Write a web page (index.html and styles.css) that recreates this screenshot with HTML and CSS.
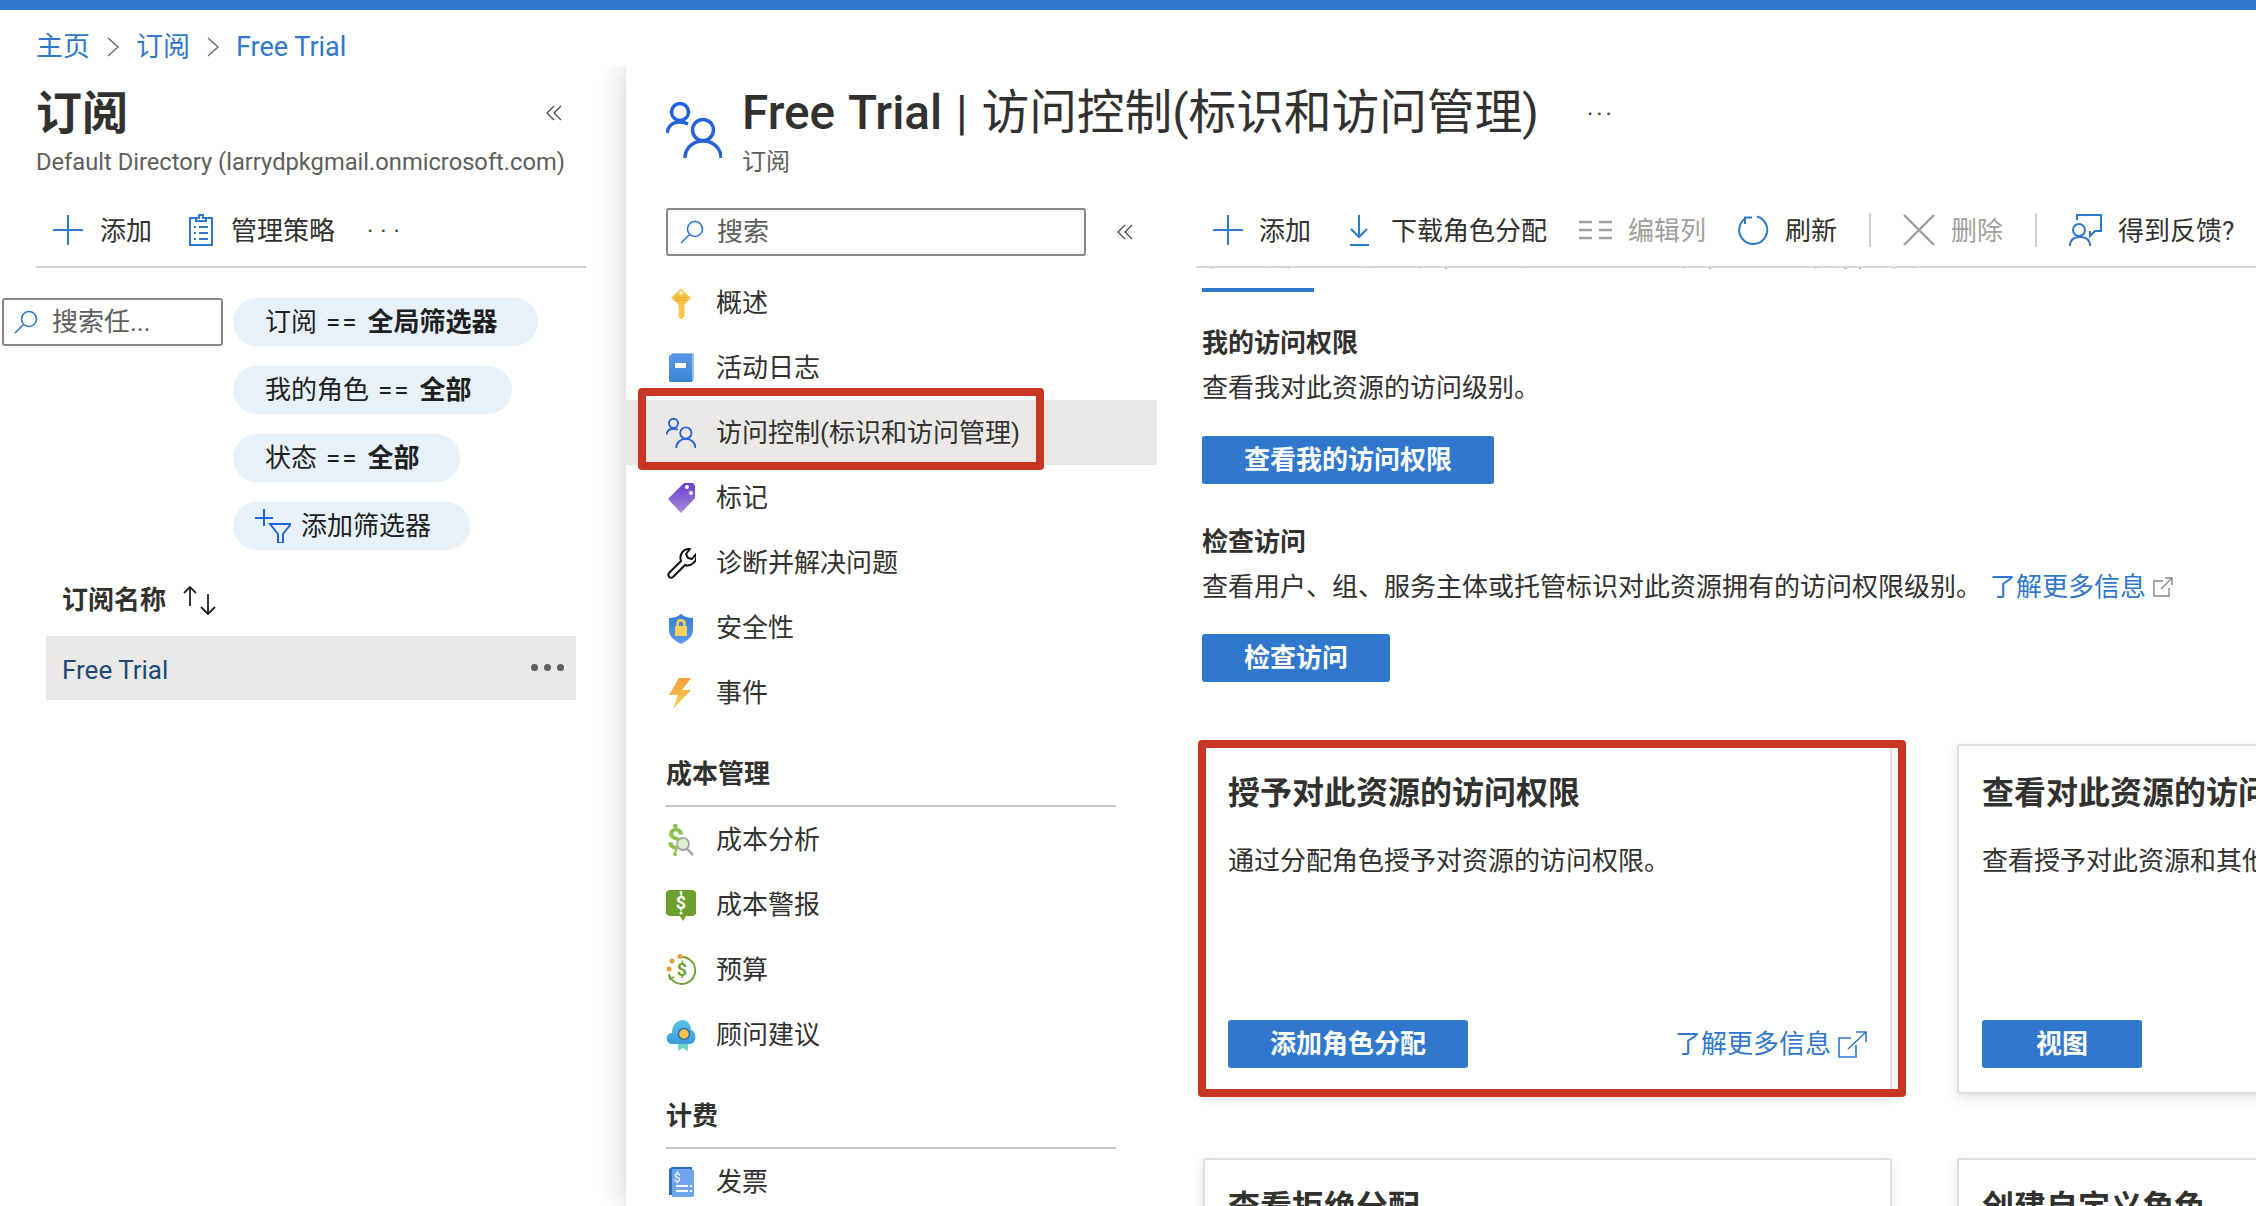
FILE: index.html
```html
<!DOCTYPE html>
<html lang="zh-CN">
<head>
    <meta charset="UTF-8">
    <title>Free Trial | 访问控制</title>
    <link rel="stylesheet" href="styles.css">
</head>
<body>
    <div class="topbar"></div>
    <div class="page">
        <div class="left">
            <div class="crumbs">
                <a>主页</a>
                <svg class="crumb-sep" viewBox="0 0 12 20"><path d="M1 1l10 9-10 9"/></svg>
                <a>订阅</a>
                <svg class="crumb-sep" viewBox="0 0 12 20"><path d="M1 1l10 9-10 9"/></svg>
                <a>Free Trial</a>
            </div>
            <div class="left-title">
                <h1>订阅</h1>
                <svg class="collapse" viewBox="0 0 16 16"><path d="M8 1L1 8l7 7M15 1L8 8l7 7"/></svg>
            </div>
            <div class="left-sub">Default Directory (larrydpkgmail.onmicrosoft.com)</div>
            <div class="left-tools">
                <svg class="ico-plus" viewBox="0 0 30 30"><path d="M15 0v30M0 15h30"/></svg>
                <span class="lt-add">添加</span>
                <svg class="ico-clip" viewBox="0 0 24 32"><path d="M7 4H1v27h22V4h-6M7 7V4h3V1h4v3h3v3zM5 13h2M10 13h9M5 19h2M10 19h9M5 25h2M10 25h9"/></svg>
                <span class="lt-policy">管理策略</span>
                <span class="dots-thin">···</span>
            </div>
            <div class="filters">
                <div class="search search-small">
                    <svg class="ico-search" viewBox="0 0 24 24"><circle cx="15" cy="9" r="7.5"/><path d="M9.5 14.5L1 23"/></svg>
                    <span>搜索任...</span>
                </div>
                <div class="pills">
                    <div class="pill">订阅<span class="eq">==</span><b>全局筛选器</b></div>
                    <div class="pill">我的角色<span class="eq">==</span><b>全部</b></div>
                    <div class="pill">状态<span class="eq">==</span><b>全部</b></div>
                    <div class="pill pill-add">
                        <svg class="ico-filter" viewBox="0 0 36 34"><path class="p" d="M9 0v17M0 9h18"/><path class="f" d="M15 15h21L28 25v9h-5v-9z"/></svg>
                        添加筛选器
                    </div>
                </div>
            </div>
            <div class="list-head">
                <b>订阅名称</b>
                <svg class="ico-sort" viewBox="0 0 34 30"><path d="M7 21V2M1 8l6-6 6 6M25 9v20M18 22l7 7 7-7"/></svg>
            </div>
            <div class="list-row">
                <span>Free Trial</span>
                <div class="dots"><i></i><i></i><i></i></div>
            </div>
        </div>

        <div class="main">
            <div class="main-head">
                <svg class="ico-users" viewBox="0 0 56 56"><circle cx="14" cy="10" r="8.5"/><path d="M1 31c1-7 6-11 13-11 3 0 6 1 8 2"/><circle cx="37" cy="28" r="10.5"/><path d="M19 56c0-10 8-17 18-17s18 7 18 17"/></svg>
                <div class="main-titles">
                    <h2><b>Free Trial</b> | 访问控制(标识和访问管理)</h2>
                    <div class="main-sub">订阅</div>
                </div>
                <span class="dots-thin main-more">···</span>
            </div>
            <div class="main-body">
                <div class="nav">
                    <div class="nav-search">
                        <div class="search search-nav">
                            <svg class="ico-search" viewBox="0 0 24 24"><circle cx="15" cy="9" r="7.5"/><path d="M9.5 14.5L1 23"/></svg>
                            <span>搜索</span>
                        </div>
                        <svg class="collapse" viewBox="0 0 16 16"><path d="M8 1L1 8l7 7M15 1L8 8l7 7"/></svg>
                    </div>
                    <div class="nav-item">
                        <svg viewBox="0 0 30 32"><path fill="#f8c344" stroke="#f8c344" stroke-linejoin="round" d="M15 2l9.500 9-6.500 6.500V29l-3 3-2-2v-2l1-1-1-1v-1l1-1-1-1v-5.500L5.500 11z"/><circle cx="15" cy="6" r="1.800" fill="#fff"/><path stroke="#e8a52b" d="M10 10.500h10M10 13h10"/></svg>
                        概述
                    </div>
                    <div class="nav-item">
                        <svg viewBox="0 0 30 32"><defs><linearGradient id="gb" x1="0" y1="0" x2="0" y2="1"><stop offset="0" stop-color="#5a9bea"/><stop offset="1" stop-color="#3c82d4"/></linearGradient></defs><path fill="url(#gb)" d="M3 4l3-2h20v27l-2 1H4l-1-1z"/><path fill="none" stroke="#3c82d4" d="M6 2h21v26l-2 2"/><rect x="9" y="11" width="11" height="5" fill="#fff"/></svg>
                        活动日志
                    </div>
                    <div class="nav-item selected">
                        <svg class="ico-users" viewBox="0 0 56 56"><circle cx="14" cy="10" r="8.500"/><path d="M1 31c1-7 6-11 13-11 3 0 6 1 8 2"/><circle cx="37" cy="28" r="10.500"/><path d="M19 56c0-10 8-17 18-17s18 7 18 17"/></svg>
                        访问控制(标识和访问管理)
                        <div class="mark mark-nav"></div>
                    </div>
                    <div class="nav-item">
                        <svg viewBox="0 0 30 32"><defs><linearGradient id="gt" x1="0" y1="0" x2="0" y2="1"><stop offset="0" stop-color="#6a3fd0"/><stop offset="1" stop-color="#a88ad8"/></linearGradient></defs><path fill="url(#gt)" d="M2 17L18 1h9l2 3v12L15 31z"/><circle cx="21" cy="5" r="2" fill="#fff"/><circle cx="25" cy="11" r="2" fill="#fff"/></svg>
                        标记
                    </div>
                    <div class="nav-item">
                        <svg viewBox="0 0 30 32"><path fill="none" stroke="#111" stroke-width="2" stroke-linejoin="round" d="M7 30c-3 2-6-1-4-4l12-12c-2-6 2-13 9-12l-4 5 2 4 4 1 4-5c2 7-5 13-11 11z"/></svg>
                        诊断并解决问题
                    </div>
                    <div class="nav-item">
                        <svg viewBox="0 0 30 32"><defs><linearGradient id="gs" x1="0" y1="0" x2="0" y2="1"><stop offset="0" stop-color="#357dd6"/><stop offset="1" stop-color="#5a9ded"/></linearGradient></defs><path fill="url(#gs)" d="M15 2c4 3 8 4 12 4v12c0 7-6 11-12 14C9 29 3 25 3 18V6c4 0 8-1 12-4z"/><rect x="9" y="14" width="12" height="10" fill="#f8cf5c"/><path fill="none" stroke="#f8cf5c" stroke-width="2.500" d="M11.500 14v-2c0-5 7-5 7 0v2"/></svg>
                        安全性
                    </div>
                    <div class="nav-item">
                        <svg viewBox="0 0 30 32"><defs><linearGradient id="gl" x1="0" y1="0" x2="0" y2="1"><stop offset="0" stop-color="#f29c38"/><stop offset="1" stop-color="#fcd35a"/></linearGradient></defs><path fill="url(#gl)" d="M13 1h12L16 13h9L7 32l5-14H3z"/></svg>
                        事件
                    </div>
                    <div class="nav-group">成本管理</div>
                    <div class="nav-item">
                        <svg viewBox="0 0 30 32"><text x="1" y="25" class="dollar" fill="#8cc24c">$</text><circle cx="9" cy="2" r="2" fill="#8cc24c"/><circle cx="9" cy="30" r="2" fill="#8cc24c"/><circle cx="17" cy="20" r="6" fill="#dfeecd" stroke="#a8a8a8" stroke-width="1.800"/><path stroke="#a8a8a8" stroke-width="2.500" d="M21 25l6 6"/></svg>
                        成本分析
                    </div>
                    <div class="nav-item">
                        <svg viewBox="0 0 30 32"><path fill="#6b9f2e" d="M3 1h24l3 2v22l-3 2H20l-3 5-3-5H3l-3-2V3z"/><text x="15" y="20" text-anchor="middle" class="dollar-s" fill="#fff">$</text><circle cx="15" cy="3.500" r="1.500" fill="#fff"/><circle cx="15" cy="24" r="1.500" fill="#fff"/></svg>
                        成本警报
                    </div>
                    <div class="nav-item">
                        <svg viewBox="0 0 30 32"><path fill="none" stroke="#6b9f2e" stroke-width="1.800" d="M16 3a13.500 13.500 0 1 1-13 18"/><path fill="none" stroke="#6b9f2e" stroke-width="1.800" d="M3 20l1 5 4-2"/><circle cx="14" cy="2.500" r="2.500" fill="#f0983a"/><circle cx="6" cy="7" r="2.500" fill="#f0983a"/><circle cx="3" cy="15" r="2.500" fill="#f0983a"/><text x="16" y="22" text-anchor="middle" class="dollar-s" fill="#6b9f2e">$</text></svg>
                        预算
                    </div>
                    <div class="nav-item">
                        <svg viewBox="0 0 30 32"><defs><linearGradient id="gc" x1="0" y1="0" x2="0" y2="1"><stop offset="0" stop-color="#5ec4ea"/><stop offset="1" stop-color="#3a9bd8"/></linearGradient></defs><path fill="#6fd8c8" d="M12 20h10v12l-5-3-5 3z"/><path fill="url(#gc)" d="M6 25c-7 0-7-11 0-11 0-8 5-13 11-13 5 0 8 5 8 10 6 1 6 14-1 14z"/><circle cx="18" cy="15" r="5.500" fill="#f8c344" stroke="#2d6cb5" stroke-width="1.500"/></svg>
                        顾问建议
                    </div>
                    <div class="nav-group">计费</div>
                    <div class="nav-item">
                        <svg viewBox="0 0 30 32"><path fill="#2e6cc0" d="M3 3l3-2h20v28H3z"/><path fill="#6fa5ec" d="M6 3h20l2 2v25l-2 1H6z"/><text x="11" y="16" text-anchor="middle" class="dollar-xs" fill="#fff">$</text><path stroke="#fff" stroke-width="2.200" d="M10 20h12M10 25h12M24 20h2M24 25h2"/></svg>
                        发票
                    </div>
                </div>

                <div class="content">
                    <div class="tools">
                        <div class="tool">
                            <svg class="w30 ico-plus" viewBox="0 0 30 30"><path d="M15 0v30M0 15h30"/></svg>
                            <span>添加</span>
                        </div>
                        <div class="tool">
                            <svg class="w32 ico-blue" viewBox="0 0 32 32"><path d="M16 1v22M8 15l8 8 8-8M7 31h19"/></svg>
                            <span>下载角色分配</span>
                        </div>
                        <div class="tool off">
                            <svg class="w33 ico-grey" viewBox="0 0 33 20"><path d="M0 2h13M20 2h13M0 10h13M20 10h13M0 18h13M20 18h13"/></svg>
                            <span>编辑列</span>
                        </div>
                        <div class="tool">
                            <svg class="w31 ico-blue" viewBox="0 0 31 32"><path d="M19 2.500A14 14 0 1 1 8 4M7 10V3.500h7"/></svg>
                            <span>刷新</span>
                        </div>
                        <div class="tool-sep"></div>
                        <div class="tool off">
                            <svg class="w32 ico-grey" viewBox="0 0 32 32"><path d="M1 1l30 30M31 1L1 31"/></svg>
                            <span>删除</span>
                        </div>
                        <div class="tool-sep"></div>
                        <div class="tool">
                            <svg class="w33 ico-blue" viewBox="0 0 33 32"><circle cx="10" cy="16" r="6"/><path d="M1 32c0-6 4-9 10-9s10 3 10 9M8 6V1h24v16h-6l-5 5v-5"/></svg>
                            <span>得到反馈?</span>
                        </div>
                    </div>
                    <div class="tabs">
                        <div class="tab-names">
                            <span>检查访问</span><span>角色分配</span><span>角色</span><span>拒绝分配</span><span>经典管理员</span>
                        </div>
                        <div class="tab-line"></div>
                    </div>

                    <div class="section">
                        <h3>我的访问权限</h3>
                        <p>查看我对此资源的访问级别。</p>
                        <div class="btn">查看我的访问权限</div>
                    </div>
                    <div class="section section-2">
                        <h3>检查访问</h3>
                        <p>查看用户、组、服务主体或托管标识对此资源拥有的访问权限级别。 <a>了解更多信息</a>
                            <svg class="ico-ext-small" viewBox="0 0 20 20"><path d="M10 4H1v15h15v-8M8 12L19 1M12 1h7v7"/></svg>
                        </p>
                        <div class="btn">检查访问</div>
                    </div>

                    <div class="cards">
                        <div class="card">
                            <h4>授予对此资源的访问权限</h4>
                            <p>通过分配角色授予对资源的访问权限。</p>
                            <div class="card-foot">
                                <div class="btn">添加角色分配</div>
                                <a class="more">了解更多信息
                                    <svg class="ico-ext" viewBox="0 0 29 27"><path d="M13 7H1v19h17V14M10 18L28 1M18 1h10v10"/></svg>
                                </a>
                            </div>
                            <div class="mark mark-card"></div>
                        </div>
                        <div class="card">
                            <h4>查看对此资源的访问权限</h4>
                            <p>查看授予对此资源和其他资源的访问权限。</p>
                            <div class="card-foot">
                                <div class="btn btn-view">视图</div>
                            </div>
                        </div>
                        <div class="card">
                            <h4>查看拒绝分配</h4>
                        </div>
                        <div class="card">
                            <h4>创建自定义角色</h4>
                        </div>
                    </div>
                </div>
            </div>
        </div>
    </div>
</body>
</html>
```

FILE: styles.css
```css
html, body {
    margin: 0;
    padding: 0;
    height: 1206px;
    overflow: hidden;
}

body {
    font-family: Roboto, "Noto Sans CJK SC", sans-serif;
    font-size: 26px;
    line-height: 36px;
    color: #323130;
    background-color: #fff;
}

svg {
    display: block;
    flex: none;
    fill: none;
}

.topbar {
    height: 10px;
    background-color: #3078cd;
}

.page {
    display: flex;
    height: 1196px;
}

/* left blade */
.left {
    width: 626px;
    flex: none;
}

.crumbs {
    display: flex;
    align-items: center;
    box-sizing: border-box;
    height: 72px;
    padding: 2px 0 0 36px;
    font-size: 27px;
    color: #3078cd;
}

.crumb-sep {
    width: 12px;
    height: 20px;
    margin: 0 17px;
    stroke: #666;
    stroke-width: 1.3;
}

.left-title {
    display: flex;
    align-items: center;
    justify-content: space-between;
    height: 62px;
    padding: 0 64px 0 36px;
}

.left-title h1 {
    margin: 0;
    font-size: 46px;
    font-weight: 700;
}

.collapse {
    width: 16px;
    height: 16px;
    stroke: #444;
    stroke-width: 1.2;
}

.left-sub {
    padding-left: 36px;
    font-size: 23.7px;
    color: #605e5c;
}

.left-tools {
    display: flex;
    align-items: center;
    height: 72px;
    margin: 14px 40px 0 36px;
    padding-left: 17px;
    border-bottom: 2px solid #d2d0ce;
}

.left-tools span {
    padding-top: 2px;
}

.ico-plus {
    width: 30px;
    height: 30px;
    stroke: #3078cd;
    stroke-width: 2;
}

.lt-add {
    margin-left: 17px;
}

.ico-clip {
    width: 24px;
    height: 32px;
    margin-left: 37px;
    stroke: #3078cd;
    stroke-width: 2;
}

.lt-policy {
    margin-left: 18px;
}

.dots-thin {
    font-size: 24px;
    letter-spacing: 7px;
    margin-left: 32px;
    color: #444;
}

.filters {
    display: flex;
    gap: 10px;
    margin: 30px 0 0 2px;
}

.search {
    display: flex;
    align-items: center;
    box-sizing: border-box;
    height: 48px;
    border: 2px solid #8a8886;
    border-radius: 3px;
    color: #605e5c;
}

.search-small {
    width: 221px;
    gap: 14px;
    padding-left: 10px;
}

.ico-search {
    width: 24px;
    height: 24px;
    stroke: #3078cd;
    stroke-width: 1.6;
}

.pills {
    display: flex;
    flex-direction: column;
    align-items: flex-start;
    gap: 20px;
}

.pill {
    display: flex;
    align-items: center;
    height: 48px;
    padding: 0 40px 0 32px;
    border-radius: 24px;
    background-color: #e7f1fa;
    color: #201f1e;
}

.pill b {
    font-weight: 700;
}

.eq {
    margin: 0 9px;
    letter-spacing: 2px;
}

.pill-add {
    padding: 0 39px 0 22px;
}

.ico-filter {
    width: 36px;
    height: 34px;
    margin-right: 10px;
    stroke: #2564d8;
    stroke-width: 2;
}

.list-head {
    display: flex;
    align-items: center;
    gap: 17px;
    height: 40px;
    margin-top: 30px;
    padding-left: 62px;
}

.ico-sort {
    width: 34px;
    height: 30px;
    stroke: #222;
    stroke-width: 1.8;
}

.list-row {
    display: flex;
    align-items: center;
    justify-content: space-between;
    width: 530px;
    height: 64px;
    margin: 16px 0 0 46px;
    padding: 4px 12px 0 16px;
    box-sizing: border-box;
    background-color: #ebe9e7;
    color: #1b4a7a;
}

.dots {
    display: flex;
    gap: 6px;
    margin-top: -5px;
}

.dots i {
    width: 7px;
    height: 7px;
    border-radius: 50%;
    background-color: #605e5c;
}

/* right blade */
.main {
    flex: 1;
    min-width: 0;
    margin-top: 56px;
    overflow: hidden;
    background-color: #fff;
    box-shadow: 0 0 28px rgba(0, 0, 0, 0.2);
    clip-path: inset(0 0 0 -40px);
}

.main-head {
    display: flex;
    height: 114px;
    padding: 16px 0 0 40px;
    box-sizing: border-box;
}

.main-head > .ico-users {
    width: 56px;
    height: 56px;
    margin: 20px 20px 0 0;
}

.ico-users {
    stroke: #2564d8;
    stroke-width: 3.5;
}

.main-titles h2 {
    margin: 0;
    font-size: 47.7px;
    line-height: 62px;
    font-weight: 400;
    word-spacing: 2px;
    white-space: nowrap;
}

.main-titles h2 b {
    font-weight: 500;
}

.main-sub {
    font-size: 24px;
    color: #605e5c;
}

.main-more {
    margin: 14px 0 0 48px;
    letter-spacing: 3px;
}

.main-body {
    display: flex;
}

.nav {
    width: 531px;
    flex: none;
    padding-top: 28px;
}

.nav-search {
    display: flex;
    align-items: center;
    gap: 31px;
    padding-left: 40px;
    margin-bottom: 14px;
}

.search-nav {
    width: 420px;
    gap: 13px;
    padding-left: 12px;
}

.nav-item {
    position: relative;
    display: flex;
    align-items: center;
    box-sizing: border-box;
    height: 65px;
    padding: 1px 0 0 40px;
    white-space: nowrap;
}

.nav-item > svg {
    width: 30px;
    height: 32px;
    margin-right: 20px;
}

.selected {
    background-color: #ebe9e7;
}

.mark {
    position: absolute;
    box-sizing: border-box;
    border: 8px solid #c93423;
    border-radius: 4px;
}

.mark-nav {
    top: -12px;
    left: 12px;
    width: 406px;
    height: 82px;
}

.nav-group {
    margin: 0 41px 0 40px;
    padding: 31px 0 13px;
    border-bottom: 2px solid #c8c6c4;
    font-weight: 700;
}

.dollar {
    font-size: 30px;
    font-weight: 700;
}

.dollar-s {
    font-size: 18px;
    font-weight: 700;
}

.dollar-xs {
    font-size: 12px;
}

/* content */
.content {
    flex: 1;
    min-width: 0;
    padding-left: 39px;
}

.tools {
    display: flex;
    align-items: center;
    height: 88px;
    padding: 26px 0 12px 17px;
    box-sizing: border-box;
    border-bottom: 2px solid #d8d8d8;
    white-space: nowrap;
}

.tool {
    display: flex;
    align-items: center;
    gap: 16px;
    margin-left: 32px;
}

.tool span {
    padding-top: 2px;
}

.tool:first-child {
    margin-left: 0;
}

.off {
    color: #a19f9d;
}

.w30 { width: 30px; height: 30px; }
.w31 { width: 31px; height: 32px; }
.w32 { width: 32px; height: 32px; }
.w33 { width: 33px; height: 32px; }

.ico-blue {
    stroke: #3078cd;
    stroke-width: 2;
}

.ico-grey {
    stroke: #a19f9d;
    stroke-width: 2.4;
}

.tool-sep {
    width: 2px;
    height: 34px;
    margin-left: 32px;
    background-color: #d2d0ce;
}

.tabs {
    height: 24px;
    margin-left: 6px;
    overflow: hidden;
}

.tab-names {
    display: flex;
    gap: 54px;
    height: 20px;
    margin: -29.500px 0 29.500px 5px;
    line-height: 36px;
    white-space: nowrap;
}

.tab-line {
    width: 112px;
    height: 4px;
    background-color: #3078cd;
}

.section {
    margin: 33px 0 0 6px;
    white-space: nowrap;
}

.section-2 {
    margin-top: 40px;
}

.section h3 {
    margin: 0;
    font-size: 26px;
    font-weight: 700;
}

.section p {
    display: flex;
    align-items: center;
    margin: 9px 0 30px;
}

.section-2 p {
    margin-bottom: 29px;
}

a {
    color: #3078cd;
}

.section p a {
    margin-left: 8px;
}

.btn {
    display: inline-flex;
    align-items: center;
    justify-content: center;
    height: 48px;
    padding: 0 42px;
    border-radius: 3px;
    background-color: #3078cd;
    color: #fff;
    font-weight: 700;
}

.ico-ext-small {
    width: 20px;
    height: 20px;
    margin-left: 7px;
    stroke: #888;
    stroke-width: 1.4;
}

.cards {
    display: grid;
    grid-template-columns: 689px 689px;
    grid-auto-rows: 350px;
    gap: 64px 65px;
    margin: 62px 0 0 7px;
}

.card {
    position: relative;
    display: flex;
    flex-direction: column;
    box-sizing: border-box;
    padding: 25px 23px 24px;
    border: 2px solid #e1dfdd;
    border-radius: 3px;
    background-color: #fff;
    box-shadow: 0 4px 12px rgba(0, 0, 0, 0.12);
    white-space: nowrap;
}

.card h4 {
    margin: 0;
    font-size: 32px;
    line-height: 44px;
    font-weight: 700;
}

.card p {
    margin: 28px 0 0;
}

.card-foot {
    display: flex;
    align-items: center;
    justify-content: space-between;
    margin-top: auto;
}

.card .btn {
    flex: none;
}

.btn-view {
    padding: 0 54px;
}

.more {
    display: flex;
    align-items: center;
    gap: 7px;
}

.ico-ext {
    width: 29px;
    height: 27px;
    stroke: #3078cd;
    stroke-width: 1.6;
}

.mark-card {
    top: -6px;
    left: -7px;
    right: -16px;
    bottom: -5px;
}
```
